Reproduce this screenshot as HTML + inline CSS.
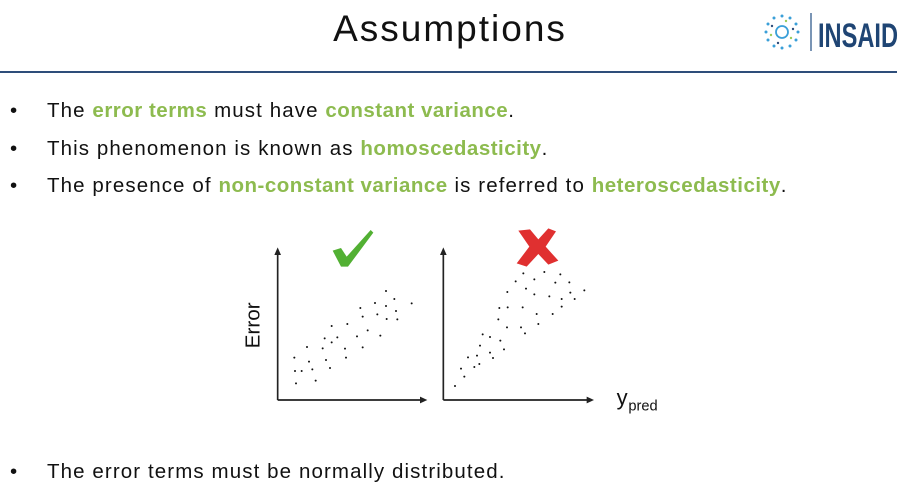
<!DOCTYPE html>
<html><head><style>
body{margin:0;width:909px;height:491px;background:#fff;position:relative;overflow:hidden;font-family:"Liberation Sans",sans-serif;color:#111}
.t{position:absolute;left:0;width:900px;text-align:center;top:8px;font-size:37px;letter-spacing:2px}
.hl{position:absolute;left:0;top:71px;width:897px;height:2px;background:#2e4d7a}
.b{position:absolute;left:47px;font-size:20.5px;letter-spacing:1.1px;white-space:nowrap}
.b:before{content:"•";position:absolute;left:-37px}
.g{color:#8dbb4f;font-weight:bold;letter-spacing:0.5px}
</style></head><body>
<div class="t">Assumptions</div>
<svg style="position:absolute;left:760px;top:10px" width="140" height="45" viewBox="0 0 140 45">
<g fill="#3a9fd8">
<circle cx="22" cy="22" r="6" fill="none" stroke="#3a9fd8" stroke-width="1.8"/>
<circle cx="22" cy="6" r="1.5"/><circle cx="30" cy="8" r="1.5"/><circle cx="36" cy="14" r="1.5"/><circle cx="38" cy="22" r="1.5"/><circle cx="36" cy="30" r="1.5"/><circle cx="30" cy="36" r="1.5"/><circle cx="22" cy="38" r="1.5"/><circle cx="14" cy="36" r="1.5"/><circle cx="8" cy="30" r="1.5"/><circle cx="6" cy="22" r="1.5"/><circle cx="8" cy="14" r="1.5"/><circle cx="14" cy="8" r="1.5"/>
<circle cx="26" cy="11" r="1.2" fill="#9ccc5a"/><circle cx="33" cy="19" r="1.2" fill="#2e4d7a"/><circle cx="31" cy="28" r="1.2" fill="#9ccc5a"/><circle cx="18" cy="33" r="1.2" fill="#2e4d7a"/><circle cx="11" cy="25" r="1.2" fill="#9ccc5a"/><circle cx="12" cy="16" r="1.2" fill="#2e4d7a"/>
</g>
<rect x="50" y="3" width="2" height="38" fill="#7a95b5"/>
<text x="58" y="37" font-family="Liberation Sans" font-weight="bold" font-size="34" fill="#1f4574" textLength="80" lengthAdjust="spacingAndGlyphs">INSAID</text>
</svg>
<div class="hl"></div>
<div class="b" style="top:99px">The <span class="g">error terms</span> must have <span class="g">constant variance</span>.</div>
<div class="b" style="top:137px">This phenomenon is known as <span class="g">homoscedasticity</span>.</div>
<div class="b" style="top:174px">The presence of <span class="g">non-constant variance</span> is referred to <span class="g">heteroscedasticity</span>.</div>
<div class="b" style="top:460px">The error terms must be normally distributed.</div>
<svg style="position:absolute;left:230px;top:220px" width="440" height="200" viewBox="0 0 1320 600">
<g stroke="#222" stroke-width="5" fill="none">
<path d="M143 540V92M143 540H580M640 540V92M640 540H1080"/>
</g>
<g fill="#222"><path d="M133 105L143 82L153 105Z"/><path d="M630 105L640 82L650 105Z"/><path d="M570 530L592 540L570 550Z"/><path d="M1070 530L1092 540L1070 550Z"/></g>
<path d="M308 92L333 84L350 110L422 30L430 38L354 140L333 140Z" fill="#52b033"/>
<path d="M865 32L900 28L925 58L955 25L978 34L947 80L985 122L955 134L925 102L890 140L860 130L898 80Z" fill="#e03030"/>
<g fill="#111">
<circle cx="193" cy="413" r="3"/><circle cx="195" cy="453" r="3"/><circle cx="215" cy="453" r="3"/><circle cx="198" cy="490" r="3"/><circle cx="231" cy="381" r="3"/><circle cx="237" cy="425" r="3"/><circle cx="247" cy="448" r="3"/><circle cx="257" cy="482" r="3"/><circle cx="278" cy="385" r="3"/><circle cx="284" cy="355" r="3"/><circle cx="288" cy="420" r="3"/><circle cx="300" cy="444" r="3"/><circle cx="305" cy="318" r="3"/><circle cx="305" cy="367" r="3"/><circle cx="322" cy="352" r="3"/><circle cx="345" cy="386" r="3"/><circle cx="348" cy="413" r="3"/><circle cx="352" cy="312" r="3"/><circle cx="381" cy="349" r="3"/><circle cx="398" cy="382" r="3"/><circle cx="391" cy="264" r="3"/><circle cx="398" cy="290" r="3"/><circle cx="413" cy="331" r="3"/><circle cx="451" cy="347" r="3"/><circle cx="435" cy="249" r="3"/><circle cx="442" cy="283" r="3"/><circle cx="468" cy="213" r="3"/><circle cx="468" cy="258" r="3"/><circle cx="470" cy="297" r="3"/><circle cx="493" cy="237" r="3"/><circle cx="498" cy="273" r="3"/><circle cx="502" cy="298" r="3"/><circle cx="545" cy="250" r="3"/>
<circle cx="675" cy="498" r="3"/><circle cx="693" cy="446" r="3"/><circle cx="703" cy="470" r="3"/><circle cx="714" cy="412" r="3"/><circle cx="733" cy="441" r="3"/><circle cx="741" cy="407" r="3"/><circle cx="748" cy="432" r="3"/><circle cx="750" cy="377" r="3"/><circle cx="758" cy="343" r="3"/><circle cx="780" cy="351" r="3"/><circle cx="780" cy="398" r="3"/><circle cx="789" cy="414" r="3"/><circle cx="811" cy="362" r="3"/><circle cx="822" cy="388" r="3"/><circle cx="805" cy="298" r="3"/><circle cx="808" cy="264" r="3"/><circle cx="832" cy="216" r="3"/><circle cx="833" cy="262" r="3"/><circle cx="831" cy="322" r="3"/><circle cx="857" cy="184" r="3"/><circle cx="878" cy="262" r="3"/><circle cx="873" cy="322" r="3"/><circle cx="885" cy="340" r="3"/><circle cx="880" cy="160" r="3"/><circle cx="888" cy="206" r="3"/><circle cx="913" cy="178" r="3"/><circle cx="913" cy="223" r="3"/><circle cx="920" cy="282" r="3"/><circle cx="925" cy="312" r="3"/><circle cx="943" cy="156" r="3"/><circle cx="958" cy="229" r="3"/><circle cx="968" cy="282" r="3"/><circle cx="976" cy="188" r="3"/><circle cx="991" cy="163" r="3"/><circle cx="995" cy="237" r="3"/><circle cx="995" cy="260" r="3"/><circle cx="1018" cy="187" r="3"/><circle cx="1021" cy="218" r="3"/><circle cx="1034" cy="237" r="3"/><circle cx="1063" cy="211" r="3"/>
</g>
<text x="0" y="0" transform="translate(88,385) rotate(-90)" font-family="Liberation Sans" font-size="62" fill="#111">Error</text>
<text x="1160" y="555" font-family="Liberation Sans" font-size="66" fill="#111">y</text>
<text x="1195" y="572" font-family="Liberation Sans" font-size="44" fill="#111">pred</text>
</svg>
</body></html>
